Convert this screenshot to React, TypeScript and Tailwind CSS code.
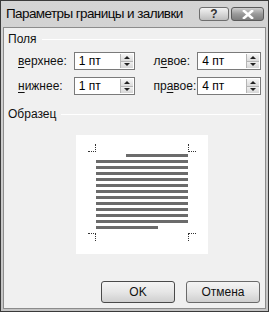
import React from 'react';

const font = { fontFamily: '"Liberation Sans", Arial, sans-serif' };

const Spin: React.FC = () => (
  <div className="flex flex-col w-[13px] h-full border-l border-[#b5b5b5]">
    <div className="flex-1 flex items-center justify-center border-b border-[#b5b5b5] bg-gradient-to-b from-[#f6f6f6] to-[#dcdcdc]">
      <div className="w-0 h-0 border-l-[3px] border-r-[3px] border-b-[3px] border-l-transparent border-r-transparent border-b-[#222]" />
    </div>
    <div className="flex-1 flex items-center justify-center bg-gradient-to-b from-[#f0f0f0] to-[#d6d6d6]">
      <div className="w-0 h-0 border-l-[3px] border-r-[3px] border-t-[3px] border-l-transparent border-r-transparent border-t-[#222]" />
    </div>
  </div>
);

const Field: React.FC<{ value: string; w: string }> = ({ value, w }) => (
  <div className={`flex items-stretch h-[18px] ${w} border border-[#7a7a7a] bg-white p-[1px]`}>
    <span className="flex-1 pl-[3px] text-[12px] leading-[14px] text-black">{value}</span>
    <Spin />
  </div>
);

const Label: React.FC<{ pre: string; key1: string; post: string; w: string }> = ({ pre, key1, post, w }) => (
  <span className={`${w} text-[12px] text-[#111]`}>
    {pre}
    <span className="underline underline-offset-2">{key1}</span>
    {post}
  </span>
);

const Group: React.FC<{ title: string }> = ({ title }) => (
  <div className="flex items-center gap-[5px] h-[16px]">
    <span className="text-[12px] text-[#111]">{title}</span>
    <div className="flex-1 h-px bg-[#c8c8c8] border-b border-white" />
  </div>
);

const Corner: React.FC<{ cls: string }> = ({ cls }) => (
  <div className={`w-[8px] h-[8px] border-dotted border-[#333] ${cls}`} />
);

export default function App() {
  const lines = Array.from({ length: 11 });
  return (
    <div style={font} className="w-[269px] h-[312px] flex flex-col border border-[#3a3a3a] bg-gradient-to-b from-[#d4d4d4] to-[#c4c4c4]">
      <div className="h-[26px] flex items-center pl-[5px] pr-[4px]">
        <span className="text-[13.5px] tracking-[-0.6px] whitespace-nowrap text-[#0a0a0a]">Параметры границы и заливки</span>
        <div className="ml-auto flex gap-[2px] self-start mt-[6px]">
          <div className="w-[30px] h-[14px] rounded-[3px] border border-[#6e6e6e] bg-gradient-to-b from-[#f2f2f2] via-[#d8d8d8] to-[#bdbdbd] flex items-center justify-center text-[12px] font-bold text-[#333] leading-none">
            ?
          </div>
          <div className="w-[33px] h-[14px] rounded-[3px] border border-[#5a5a5a] bg-gradient-to-b from-[#cfcfcf] via-[#9a9a9a] to-[#7d7d7d] flex items-center justify-center">
            <svg width="12" height="9" viewBox="0 0 12 9">
              <path d="M2 1 L10 8 M10 1 L2 8" stroke="#fff" strokeWidth="2.6" strokeLinecap="square" />
            </svg>
          </div>
        </div>
      </div>
      <div className="flex-1 mx-[2px] mb-[2px] border border-[#8c8c8c] bg-[#f0f0f0] flex flex-col px-[4px] pt-[3px]">
        <Group title="Поля" />
        <div className="flex items-center mt-[5px] pl-[10px]">
          <Label pre="" key1="в" post="ерхнее:" w="w-[56px]" />
          <Field value="1 пт" w="w-[62px]" />
          <Label pre="л" key1="е" post="вое:" w="w-[44px] ml-[18px]" />
          <Field value="4 пт" w="w-[64px]" />
        </div>
        <div className="flex items-center mt-[7px] pl-[10px]">
          <Label pre="" key1="н" post="ижнее:" w="w-[56px]" />
          <Field value="1 пт" w="w-[62px]" />
          <Label pre="пр" key1="а" post="вое:" w="w-[44px] ml-[18px]" />
          <Field value="4 пт" w="w-[64px]" />
        </div>
        <div className="mt-[11px]">
          <Group title="Образец" />
        </div>
        <div className="mt-[13px] ml-[68px] w-[132px] h-[119px] bg-white flex flex-col px-[12px] pt-[9px]">
          <div className="flex justify-between">
            <Corner cls="border-r border-b" />
            <Corner cls="border-l border-b" />
          </div>
          <div className="flex flex-col gap-[3px] px-[8px] mt-[2px]">
            <div className="ml-[30px] h-[3px] bg-[#6b6b6b]" />
            {lines.map((_, i) => (
              <div key={i} className="h-[3px] bg-[#6b6b6b]" />
            ))}
            <div className="mr-[30px] h-[3px] bg-[#6b6b6b]" />
          </div>
          <div className="flex justify-between mt-[4px]">
            <Corner cls="border-r border-t" />
            <Corner cls="border-l border-t" />
          </div>
        </div>
        <div className="mt-auto mb-[5px] flex justify-end gap-[11px] pr-[1px]">
          <button className="w-[74px] h-[22px] rounded-[3px] border border-[#4a4a4a] bg-gradient-to-b from-[#f4f4f4] via-[#e6e6e6] to-[#cfcfcf] text-[12px] text-[#111]">
            OK
          </button>
          <button className="w-[74px] h-[22px] rounded-[3px] border border-[#6a6a6a] bg-gradient-to-b from-[#f4f4f4] via-[#e6e6e6] to-[#cfcfcf] text-[12px] text-[#111]">
            Отмена
          </button>
        </div>
      </div>
    </div>
  );
}
